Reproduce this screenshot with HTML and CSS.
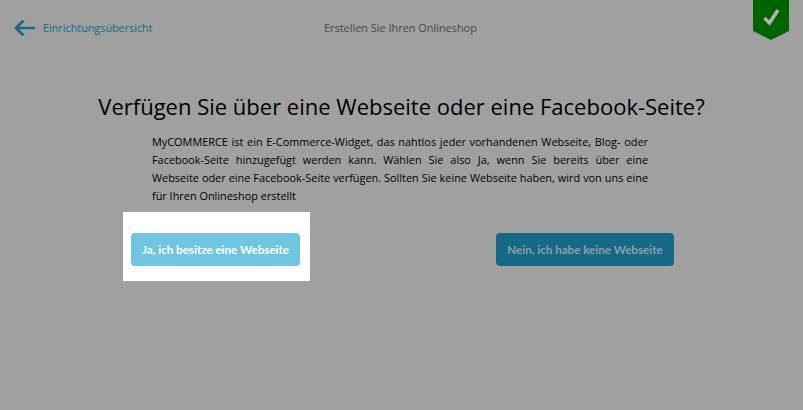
FILE: index.html
```html
<!DOCTYPE html>
<html lang="de">
	<head>
		<meta charset="utf-8">
		<title>Erstellen Sie Ihren Onlineshop</title>
		<link rel="stylesheet" href="styles.css">
	</head>
	<body>
		<div class="top">
			<a class="back" href="#">
				<svg class="back-icon" width="22" height="18" viewBox="0 0 22 18"><path d="M21 9H2M9.500 1.500L2 9l7.500 7.500" fill="none" stroke="#156a87" stroke-width="2.700"/></svg>
				Einrichtungsübersicht
			</a>
			<div class="top-title">Erstellen Sie Ihren Onlineshop</div>
			<div class="ribbon">
				<svg width="36" height="40" viewBox="0 0 36 40"><path d="M0 0h36v31L18 40 0 31z" fill="#006400"/><path d="M11.500 18l5 5 8.500-13" fill="none" stroke="#b3b3b3" stroke-width="3.500"/></svg>
			</div>
		</div>
		<h1>Verfügen Sie über eine Webseite oder eine Facebook-Seite?</h1>
		<p class="intro">
			<span class="intro-line">MyCOMMERCE ist ein E-Commerce-Widget, das nahtlos jeder vorhandenen Webseite, Blog- oder</span>
			<span class="intro-line">Facebook-Seite hinzugefügt werden kann. Wählen Sie also Ja, wenn Sie bereits über eine</span>
			<span class="intro-line">Webseite oder eine Facebook-Seite verfügen. Sollten Sie keine Webseite haben, wird von uns eine</span>
			für Ihren Onlineshop erstellt
		</p>
		<div class="choices">
			<div class="spot"><a class="btn btn-yes" href="#">Ja, ich besitze eine Webseite</a></div>
			<a class="btn btn-no" href="#">Nein, ich habe keine Webseite</a>
		</div>
	</body>
</html>
```

FILE: styles.css
```css
html,body{ height: 100%; }
body{ margin: 0; background: #a0a0a0; color: #000; font-family: "Open Sans", "Noto Sans", sans-serif; overflow: hidden; }
a{ text-decoration: none; }

.top{ display: flex; align-items: flex-start; height: 40px; padding: 0 14px; }
.back{ display: flex; align-items: center; gap: 7px; width: 310px; height: 55px; color: #156a87; font-size: 10.8px; }
.top-title{ flex: 1; padding-top: 19px; color: #3d4a50; font-size: 10.9px; line-height: 17px; }
.ribbon{ height: 40px; }

h1{ margin: 51px 0 0; font-size: 22px; font-weight: 400; line-height: 30px; text-align: center; }
.intro{ width: 496px; margin: 12px 0 0 152px; font-size: 10.9px; line-height: 18px; }
.intro-line{ display: block; white-space: nowrap; text-align: justify; text-align-last: justify; }

.choices{ display: flex; align-items: center; justify-content: space-between; width: 551px; margin: 7px 0 0 123px; }
.spot{ padding: 21px 10px 15px 8px; background: #fff; }
.btn{ display: block; height: 33px; border-radius: 4px; font-family: Lato, sans-serif; font-size: 11.6px; font-weight: 700; line-height: 33px; text-align: center; }
.btn-yes{ width: 169px; background: #70c5e2; color: #fff; }
.btn-no{ width: 178px; margin-top: 6px; background: #156a87; color: #8f9fa6; }
```
